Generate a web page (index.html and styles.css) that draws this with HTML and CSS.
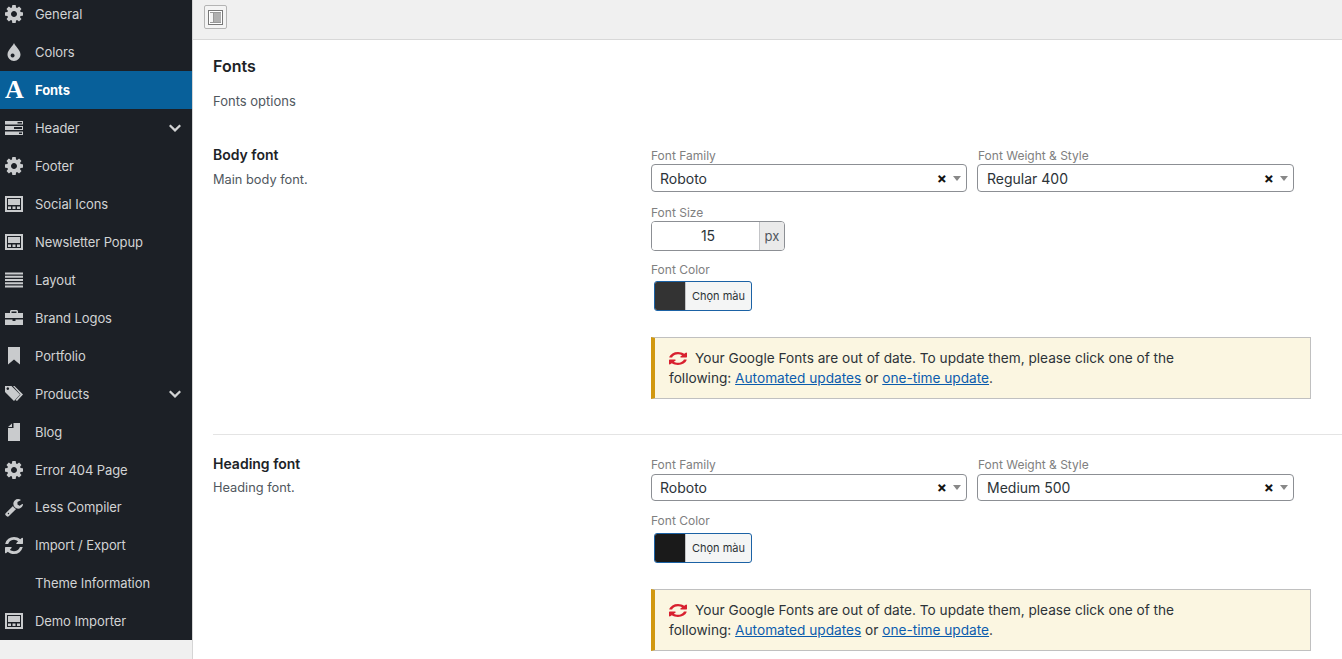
FILE: index.html
```html
<!DOCTYPE html>
<html lang="en">
<head>
  <meta charset="UTF-8">
  <title>Theme Options - Fonts</title>
  <link rel="stylesheet" href="styles.css">
</head>
<body>
  <svg class="sprite" aria-hidden="true">
    <symbol id="i-gear" viewBox="128 128 1536 1536"><path d="M1152 896q0-106-75-181t-181-75-181 75-75 181 75 181 181 75 181-75 75-181zm512-109v222q0 12-8 23t-20 13l-185 28q-19 54-39 91 35 50 107 138 10 12 10 25t-9 23q-27 37-99 108t-94 71q-12 0-26-9l-138-108q-44 23-91 38-16 136-29 186-7 28-36 28h-222q-14 0-24.500-8.500t-11.500-21.500l-28-184q-49-16-90-37l-141 107q-10 9-25 9-14 0-25-11-126-114-165-168-7-10-7-23 0-12 8-23 15-21 51-66.500t54-70.500q-27-50-41-99l-183-27q-13-2-21-12.500t-8-23.500v-222q0-12 8-23t19-13l186-28q14-46 39-92-40-57-107-138-10-12-10-24 0-10 9-23 26-36 98.500-107.500t94.500-71.500q13 0 26 10l138 107q44-23 91-38 16-136 29-186 7-28 36-28h222q14 0 24.500 8.500t11.500 21.500l28 184q49 16 90 37l142-107q9-9 24-9 13 0 25 10 129 119 165 170 7 8 7 22 0 12-8 23-15 21-51 66.500t-54 70.500q26 50 41 98l183 28q13 2 21 12.500t8 23.500z"/></symbol>
    <symbol id="i-drop" viewBox="0 0 18 18"><path fill-rule="evenodd" d="M9 0c1 3 6.500 7 6.500 11.500C15.500 15 12.500 18 9 18s-6.500-3-6.500-6.500C2.500 7 8 3 9 0zM7.600 10.500a2 2 0 1 0 .01 0z"/></symbol>
    <symbol id="i-header" viewBox="0 0 18 18"><path fill-rule="evenodd" d="M0 2h18v3.600H0zM12.500 3v1.600H17V3zM0 7h18v4H0zM9 8v2h8V8zM0 12.400h18V16H0zM14 13.400V15h3v-1.600z"/></symbol>
    <symbol id="i-window" viewBox="0 0 18 18"><path fill-rule="evenodd" d="M0 1h18v16H0zM2 3v12h14V3zM3 4h12v6H3zM3 11.500h3V14H3zM7.500 11.500h3V14h-3zM12 11.500h3V14h-3z"/></symbol>
    <symbol id="i-lines" viewBox="0 0 18 18"><path d="M0 1.500h18v2H0zM0 4.800h18v2H0zM0 8h18v2H0zM0 11.300h18v2H0zM0 14.500h18v2H0z"/></symbol>
    <symbol id="i-case" viewBox="0 0 18 18"><path fill-rule="evenodd" d="M6 1h6l1 1v2h5v5H0V4h5V2zM6.500 2.500V4h5V2.500zM0 10.500h7.500V12h3v-1.500H18V16H0z"/></symbol>
    <symbol id="i-mark" viewBox="0 0 18 18"><path d="M3 0h12v17.500l-6-5-6 5z"/></symbol>
    <symbol id="i-tags" viewBox="0 0 18 18"><path fill-rule="evenodd" d="M0 1h6.500L15 9.500 9 16 0 7zM2.800 2.300a1.300 1.300 0 1 0 .01 0zM8 1h1.500l8.500 8.500L12 16l-1.500-1 5-5.500z"/></symbol>
    <symbol id="i-page" viewBox="0 0 18 18"><path d="M8.500 0H15v18H3V5h5.500zM7 .5V4H3z"/></symbol>
    <symbol id="i-wrench" viewBox="64 128 1664 1664"><path d="M448 1472q0-26-19-45t-45-19-45 19-19 45 19 45 45 19 45-19 19-45zm644-420l-682 682q-37 37-90 37-52 0-91-37l-106-108q-38-36-38-90 0-53 38-91l681-681q39 98 114.500 173.500t173.500 114.500zm634-435q0 39-23 106-47 134-164.500 217.500t-258.500 83.500q-185 0-316.500-131.500t-131.500-316.500 131.500-316.500 316.500-131.500q58 0 121.500 16.500t107.500 46.500q16 11 16 28t-16 28l-293 169v224l193 107q5-3 79-48.500t135.500-81 70.500-35.500q15 0 23.500 10t8.500 25z"/></symbol>
    <symbol id="i-sync" viewBox="128 128 1536 1536" preserveAspectRatio="none"><path d="M1639 1056q0 5-1 7-64 268-268 434.500t-478 166.500q-146 0-282.500-55t-243.500-157l-129 129q-19 19-45 19t-45-19-19-45v-448q0-26 19-45t45-19h448q26 0 45 19t19 45-19 45l-137 137q71 66 161 102t187 36q134 0 250-65t186-179q11-17 53-117 8-23 30-23h192q13 0 22.500 9.500t9.500 22.500zm25-800v448q0 26-19 45t-45 19h-448q-26 0-45-19t-19-45 19-45l138-138q-148-137-349-137-134 0-250 65t-186 179q-11 17-53 117-8 23-30 23h-199q-13 0-22.500-9.500t-9.500-22.500v-7q65-268 270-434.500t480-166.500q146 0 284 55.500t245 156.500l130-129q19-19 45-19t45 19 19 45z"/></symbol>
    <symbol id="i-chevron" viewBox="0 0 14 10"><path d="M1.800 1 7 6 12.200 1 14 2.800 7 9.600 0 2.800z"/></symbol>
  </svg>

  <div class="layout">
    <nav class="sidebar">
      <a class="nav-item"><svg class="nav-icon"><use href="#i-gear"/></svg>General</a>
      <a class="nav-item"><svg class="nav-icon"><use href="#i-drop"/></svg>Colors</a>
      <a class="nav-item active"><span class="nav-icon font-glyph">A</span>Fonts</a>
      <a class="nav-item"><svg class="nav-icon"><use href="#i-header"/></svg>Header<svg class="nav-chevron"><use href="#i-chevron"/></svg></a>
      <a class="nav-item"><svg class="nav-icon"><use href="#i-gear"/></svg>Footer</a>
      <a class="nav-item"><svg class="nav-icon"><use href="#i-window"/></svg>Social Icons</a>
      <a class="nav-item"><svg class="nav-icon"><use href="#i-window"/></svg>Newsletter Popup</a>
      <a class="nav-item"><svg class="nav-icon"><use href="#i-lines"/></svg>Layout</a>
      <a class="nav-item"><svg class="nav-icon"><use href="#i-case"/></svg>Brand Logos</a>
      <a class="nav-item"><svg class="nav-icon"><use href="#i-mark"/></svg>Portfolio</a>
      <a class="nav-item"><svg class="nav-icon"><use href="#i-tags"/></svg>Products<svg class="nav-chevron"><use href="#i-chevron"/></svg></a>
      <a class="nav-item"><svg class="nav-icon"><use href="#i-page"/></svg>Blog</a>
      <a class="nav-item"><svg class="nav-icon"><use href="#i-gear"/></svg>Error 404 Page</a>
      <a class="nav-item short"><svg class="nav-icon"><use href="#i-wrench"/></svg>Less Compiler</a>
      <a class="nav-item"><svg class="nav-icon icon-sync"><use href="#i-sync"/></svg>Import / Export</a>
      <a class="nav-item"><span class="nav-icon"></span>Theme Information</a>
      <a class="nav-item"><svg class="nav-icon"><use href="#i-window"/></svg>Demo Importer</a>
    </nav>

    <main class="main">
      <div class="toolbar">
        <button class="expand-btn"><span class="expand-icon"><span></span></span></button>
      </div>

      <div class="panel">
        <h2 class="panel-title">Fonts</h2>
        <p class="panel-desc">Fonts options</p>

        <section class="option option-first">
          <div class="option-info">
            <h3>Body font</h3>
            <p>Main body font.</p>
          </div>
          <div class="option-fields">
            <div class="field-row">
              <div class="field">
                <label>Font Family</label>
                <div class="select"><span>Roboto</span><i class="clear">×</i><i class="caret"></i></div>
              </div>
              <div class="field">
                <label>Font Weight &amp; Style</label>
                <div class="select"><span>Regular 400</span><i class="clear">×</i><i class="caret"></i></div>
              </div>
            </div>
            <div class="field">
              <label>Font Size</label>
              <div class="size-input"><span class="size-value">15</span><span class="size-unit">px</span></div>
            </div>
            <div class="field">
              <label>Font Color</label>
              <button class="color-btn"><span class="swatch swatch-body"></span><span class="color-text">Chọn màu</span></button>
            </div>
            <div class="notice">
              <svg class="notice-icon"><use href="#i-sync"/></svg>Your Google Fonts are out of date. To update them, please click one of the following: <a href="#">Automated updates</a> or <a href="#">one-time update</a>.
            </div>
          </div>
        </section>

        <section class="option option-last">
          <div class="option-info">
            <h3>Heading font</h3>
            <p>Heading font.</p>
          </div>
          <div class="option-fields">
            <div class="field-row">
              <div class="field">
                <label>Font Family</label>
                <div class="select"><span>Roboto</span><i class="clear">×</i><i class="caret"></i></div>
              </div>
              <div class="field">
                <label>Font Weight &amp; Style</label>
                <div class="select"><span>Medium 500</span><i class="clear">×</i><i class="caret"></i></div>
              </div>
            </div>
            <div class="field">
              <label>Font Color</label>
              <button class="color-btn"><span class="swatch swatch-heading"></span><span class="color-text">Chọn màu</span></button>
            </div>
            <div class="notice">
              <svg class="notice-icon"><use href="#i-sync"/></svg>Your Google Fonts are out of date. To update them, please click one of the following: <a href="#">Automated updates</a> or <a href="#">one-time update</a>.
            </div>
          </div>
        </section>
      </div>
    </main>
  </div>
</body>
</html>
```

FILE: styles.css
```css
html, body {
  margin: 0;
  height: 100%;
  overflow: hidden;
}

body {
  font-family: Inter, "Liberation Sans", sans-serif;
  font-size: 13px;
  color: #3c434a;
  background-color: #f0f0f0;
}

.sprite {
  display: none;
}

.layout {
  display: flex;
  height: 100%;
  overflow: hidden;
}

/* sidebar */
.sidebar {
  flex: none;
  width: 192px;
  height: 645px;
  margin-top: -5px;
  background-color: #1c2026;
}

.nav-item {
  display: flex;
  align-items: center;
  height: 38px;
  padding: 0 11px 0 5px;
  letter-spacing: -0.08px;
  color: #d2d3d4;
  line-height: 1;
}

.nav-item.short {
  height: 37px;
}

.nav-item.active {
  background-color: #08609a;
  color: #fff;
  font-weight: 700;
}

.nav-icon {
  flex: none;
  width: 18px;
  height: 18px;
  margin-right: 12px;
  fill: #c9cbcd;
}

.icon-sync {
  height: 17px;
}

.font-glyph {
  font-family: "Liberation Serif", serif;
  font-size: 26px;
  font-weight: 700;
  line-height: 18px;
  text-align: center;
  color: #fff;
}

.nav-chevron {
  width: 12px;
  height: 10px;
  margin-left: auto;
  fill: #d2d3d4;
}

/* main area */
.main {
  flex: 1;
  min-width: 0;
  border-left: 1px solid #d5d5d5;
  background-color: #fff;
}

.toolbar {
  display: flex;
  align-items: center;
  height: 40px;
  padding: 0 0 5px 11px;
  box-sizing: border-box;
  border-bottom: 1px solid #d8d8d8;
  background-color: #f0f0f0;
}

.expand-btn {
  width: 23px;
  height: 24px;
  padding: 0;
  border: 1px solid #b4b4b4;
  border-radius: 2px;
  background-color: #f4f4f4;
}

.expand-icon {
  display: block;
  width: 15px;
  height: 15px;
  margin: auto;
  padding: 1px;
  box-sizing: border-box;
  border: 1px solid #777;
  background-color: #fff;
}

.expand-icon span {
  display: block;
  height: 100%;
  box-sizing: border-box;
  border-top: 1px solid #999;
  border-bottom: 1px solid #999;
  background: linear-gradient(to right, #f4f4f4 3px, #999 3px, #999 4px, #b0b0b0 4px);
}

.panel {
  padding: 16px 0 0 20px;
}

.panel-title {
  margin: 0;
  font-size: 16px;
  line-height: 20px;
  font-weight: 600;
  color: #1d2327;
}

.panel-desc {
  margin: 15px 0 15px;
  line-height: 20px;
  color: #50575e;
}

/* option rows */
.option {
  display: flex;
  padding: 22px 0 35px;
  border-bottom: 1px solid #e4e4e4;
}

.option-last {
  border-bottom: 0;
}

.option-info {
  flex: none;
  width: 438px;
  margin-top: -3px;
}

.option-info h3 {
  margin: 0;
  font-size: 14px;
  line-height: 20px;
  font-weight: 600;
  color: #1d2327;
}

.option-info p {
  margin: 4px 0 0;
  font-size: 12.8px;
  line-height: 20px;
  color: #50575e;
}

.option-first .option-info p {
  margin-top: 5px;
}

.option-fields {
  width: 660px;
}

.field-row {
  display: flex;
  gap: 10px;
}

.field {
  margin-bottom: 11px;
}

.option-first .field-row .field {
  margin-bottom: 13px;
}

.option-last .field-row .field {
  margin-bottom: 12px;
}

.option-last .select {
  height: 27px;
  margin-top: 1px;
}

.option-last .color-btn {
  margin-top: 4px;
}

.field label {
  display: block;
  font-size: 12px;
  line-height: 16px;
  color: #808080;
}

.field-row .field + .field label {
  padding-left: 1px;
}

.select {
  display: flex;
  align-items: center;
  width: 316px;
  height: 28px;
  padding: 0 5px 0 8px;
  box-sizing: border-box;
  border: 1px solid #8c8f94;
  border-radius: 4px;
  background-color: #fff;
  font-size: 14px;
  color: #2c3338;
}

.field + .field .select {
  width: 317px;
  padding-left: 9px;
}

.select span {
  flex: 1;
}

.clear {
  font-style: normal;
  font-weight: 700;
  font-size: 15px;
  line-height: 1;
  color: #111;
  margin-right: 6px;
}

.caret {
  width: 0;
  height: 0;
  border-left: 4px solid transparent;
  border-right: 4px solid transparent;
  border-top: 5px solid #888;
}

.size-input {
  display: flex;
  width: 134px;
  height: 30px;
  box-sizing: border-box;
  border: 1px solid #8c8f94;
  border-radius: 4px;
  overflow: hidden;
  font-size: 14px;
  color: #2c3338;
}

.size-value {
  flex: 1;
  padding-left: 5px;
  line-height: 28px;
  text-align: center;
  background-color: #fff;
}

.size-unit {
  width: 24px;
  line-height: 28px;
  text-align: center;
  font-size: 13px;
  color: #50575e;
  border-left: 1px solid #c3c4c7;
  background-color: #eaeaea;
}

.color-btn {
  display: flex;
  width: 98px;
  height: 30px;
  margin: 3px 0 0 3px;
  padding: 0;
  box-sizing: border-box;
  border: 1px solid #1b62a5;
  border-radius: 3px;
  overflow: hidden;
  background-color: #f4f5f5;
  font-family: inherit;
}

.swatch {
  flex: none;
  width: 30px;
  height: 100%;
  border-right: 1px solid #c3c4c7;
}

.swatch-body {
  background-color: #333;
}

.swatch-heading {
  background-color: #1a1a1a;
}

.color-text {
  flex: 1;
  font-size: 11px;
  line-height: 28px;
  text-align: center;
  color: #2c3338;
}

.notice {
  width: 660px;
  margin-top: 26px;
  padding: 10px 120px 10px 14px;
  box-sizing: border-box;
  border: 1px solid #c0c0c0;
  border-left: 4px solid #d1980f;
  background-color: #fbf6e1;
  font-size: 13.67px;
  line-height: 20px;
  color: #2c3338;
}

.notice a {
  color: #0b5cad;
  text-decoration: underline;
}

.notice-icon {
  width: 18px;
  height: 13px;
  margin-right: 8px;
  vertical-align: -2px;
  fill: #d8202f;
}
```
